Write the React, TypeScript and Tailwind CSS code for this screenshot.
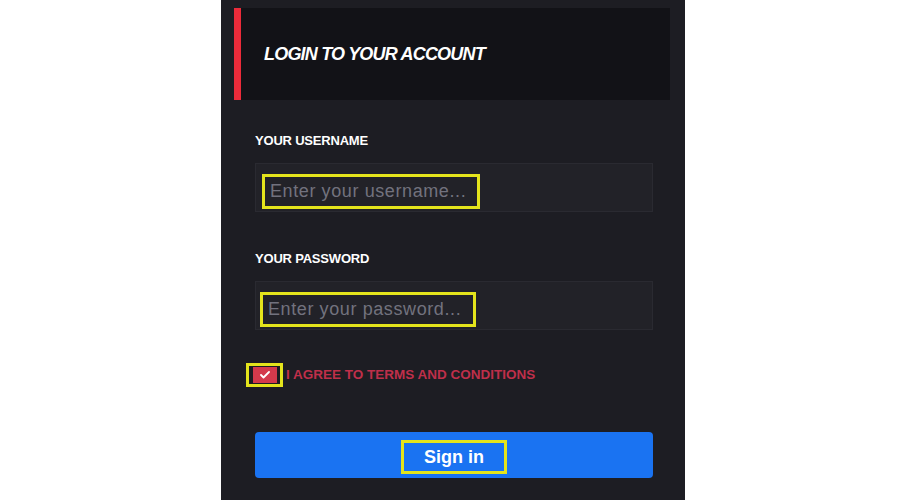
import { useState } from 'react'

const font = { fontFamily: '"Liberation Sans", Arial, sans-serif' }

function Field({ label, placeholder, boxWidth, boxOffset }: { label: string; placeholder: string; boxWidth: string; boxOffset: string }) {
  return (
    <div className="flex flex-col">
      <label className="text-[13px] leading-[16px] font-bold text-white tracking-[-0.2px]">{label}</label>
      <div className={`mt-[14px] h-[49px] w-full bg-[#222228] border border-[#2a2a31] flex items-center pt-[8px] ${boxOffset}`}>
        <span className={`h-[35px] ${boxWidth} border-[3px] border-[#e4e41c] flex items-center pl-[5px] text-[18px] tracking-[0.6px] text-[#72727e] whitespace-nowrap overflow-hidden`}>
          {placeholder}
        </span>
      </div>
    </div>
  )
}

export default function App() {
  const [agreed, setAgreed] = useState(true)

  return (
    <div className="w-[900px] h-[500px] bg-white" style={font}>
      <div className="ml-[221px] w-[464px] h-[500px] bg-[#1d1d23] pt-[8px]">
        <div className="ml-[13px] w-[436px] h-[92px] bg-[#121217] border-l-[7px] border-[#ec2b3a] flex items-center pl-[23px]">
          <h1 className="text-[18px] font-bold italic text-white tracking-[-0.8px]">LOGIN TO YOUR ACCOUNT</h1>
        </div>

        <div className="pl-[34px] pr-[32px]">
          <div className="mt-[33px]">
            <Field label="YOUR USERNAME" placeholder="Enter your username..." boxWidth="w-[218px]" boxOffset="pl-[6px]" />
          </div>
          <div className="mt-[39px]">
            <Field label="YOUR PASSWORD" placeholder="Enter your password..." boxWidth="w-[216px]" boxOffset="pl-[4px]" />
          </div>

          <div className="mt-[33px] -ml-[9px] h-[24px] flex items-center">
            <button
              onClick={() => setAgreed(!agreed)}
              className="w-[37px] h-[24px] border-[3px] border-[#e4e41c] flex items-center justify-center bg-[#1d1d23]"
            >
              <span className="w-[24px] h-[16px] bg-[#d43a4c] flex items-center justify-center">
                {agreed && (
                  <svg width="10" height="8" viewBox="0 0 10 8" fill="none">
                    <path d="M1 4l2.5 2.5L9 1" stroke="white" strokeWidth="1.8" strokeLinecap="round" strokeLinejoin="round" />
                  </svg>
                )}
              </span>
            </button>
            <span className="ml-[3px] text-[13.5px] font-bold text-[#bf2f4a]">I AGREE TO TERMS AND CONDITIONS</span>
          </div>

          <button className="mt-[45px] w-full h-[46px] bg-[#1a73f2] rounded-[4px] flex items-center justify-center">
            <span className="w-[106px] h-[34px] mt-[4px] border-[3px] border-[#e4e41c] flex items-center justify-center text-[18px] font-semibold text-white">
              Sign in
            </span>
          </button>
        </div>
      </div>
    </div>
  )
}
